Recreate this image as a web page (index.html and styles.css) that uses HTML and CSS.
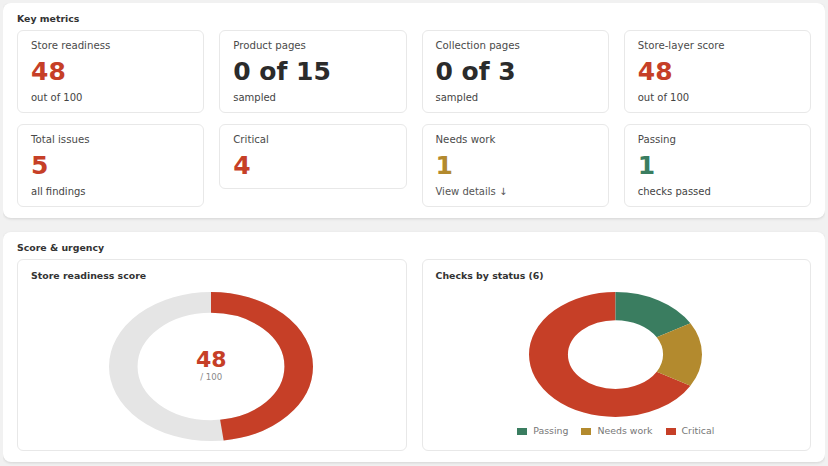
FILE: index.html
```html
<!doctype html>
<html lang="en">
<head>
  <meta charset="UTF-8">
  <meta name="viewport" content="width=device-width, initial-scale=1.0">
  <title>Store audit</title>
  <link rel="stylesheet" href="styles.css">
</head>
<body>
  <section class="panel">
    <h2 class="panel-title">Key metrics</h2>
    <div class="metric-grid">
      <div class="metric">
        <div class="metric-label">Store readiness</div>
        <div class="metric-value bad">48</div>
        <div class="metric-sub">out of 100</div>
      </div>
      <div class="metric">
        <div class="metric-label">Product pages</div>
        <div class="metric-value">0 of 15</div>
        <div class="metric-sub">sampled</div>
      </div>
      <div class="metric">
        <div class="metric-label">Collection pages</div>
        <div class="metric-value">0 of 3</div>
        <div class="metric-sub">sampled</div>
      </div>
      <div class="metric">
        <div class="metric-label">Store-layer score</div>
        <div class="metric-value bad">48</div>
        <div class="metric-sub">out of 100</div>
      </div>
      <div class="metric">
        <div class="metric-label">Total issues</div>
        <div class="metric-value bad">5</div>
        <div class="metric-sub">all findings</div>
      </div>
      <div class="metric">
        <div class="metric-label">Critical</div>
        <div class="metric-value bad">4</div>
      </div>
      <div class="metric">
        <div class="metric-label">Needs work</div>
        <div class="metric-value warn">1</div>
        <a class="metric-sub link" href="#details">View details ↓</a>
      </div>
      <div class="metric">
        <div class="metric-label">Passing</div>
        <div class="metric-value good">1</div>
        <div class="metric-sub">checks passed</div>
      </div>
    </div>
  </section>

  <section class="panel">
    <h2 class="panel-title">Score &amp; urgency</h2>
    <div class="chart-grid">
      <div class="chart-card">
        <h3 class="chart-title">Store readiness score</h3>
        <div class="gauge">
          <svg class="gauge-svg" viewBox="0 0 200 200" preserveAspectRatio="none">
            <circle cx="100" cy="100" r="86" fill="none" stroke="#e5e5e5" stroke-width="28"/>
            <circle cx="100" cy="100" r="86" fill="none" stroke="#c63f27" stroke-width="28"
                    pathLength="100" stroke-dasharray="48 100" transform="rotate(-90 100 100)"/>
          </svg>
          <div class="gauge-label">
            <span class="gauge-value">48</span>
            <span class="gauge-max">/ 100</span>
          </div>
        </div>
      </div>

      <div class="chart-card">
        <h3 class="chart-title">Checks by status (6)</h3>
        <svg class="status-svg" viewBox="0 0 200 200" preserveAspectRatio="none">
          <g transform="rotate(-90 100 100)" fill="none" stroke-width="45">
            <circle cx="100" cy="100" r="77.5" stroke="#c63f27" pathLength="100"
                    stroke-dasharray="66.67 100" stroke-dashoffset="-33.33"/>
            <circle cx="100" cy="100" r="77.5" stroke="#3a7d60" pathLength="100"
                    stroke-dasharray="16.67 100"/>
            <circle cx="100" cy="100" r="77.5" stroke="#b38a2e" pathLength="100"
                    stroke-dasharray="16.67 100" stroke-dashoffset="-16.67"/>
          </g>
        </svg>
        <ul class="legend">
          <li><span class="swatch good-bg"></span>Passing</li>
          <li><span class="swatch warn-bg"></span>Needs work</li>
          <li><span class="swatch bad-bg"></span>Critical</li>
        </ul>
      </div>
    </div>
  </section>
</body>
</html>
```

FILE: styles.css
```css
body {
  font-family: 'DejaVu Sans', 'Liberation Sans', sans-serif;
  background: #f1f1f1;
  margin: 3px;
  color: #333;
}
.panel {
  background: #fff;
  border-radius: 8px;
  box-shadow: 0 1px 3px rgba(0,0,0,0.12);
  padding: 10px 14px 11px;
  margin-bottom: 14px;
}
.panel-title {
  margin: 0 0 5px;
  font-size: 9.4px;
  line-height: 12px;
  font-weight: bold;
  color: #333;
}
.metric-grid {
  display: grid;
  grid-template-columns: repeat(4, 1fr);
  gap: 11px 15px;
  align-items: start;
}
.metric {
  border: 1px solid #e8e8e8;
  border-radius: 6px;
  padding: 9px 14px 8px 13px;
}
.metric-label {
  font-size: 10.2px;
  line-height: 12px;
  color: #4a4a4a;
}
.metric-value {
  margin-top: 6px;
  font-size: 25px;
  line-height: 28px;
  font-weight: bold;
  color: #2b2b2b;
}
.metric-sub {
  display: block;
  margin-top: 6px;
  font-size: 10px;
  line-height: 12px;
  color: #444;
}
.metric-sub.link {
  color: #555;
  text-decoration: none;
}
.bad { color: #c63f27; }
.warn { color: #b38a2e; }
.good { color: #3a7d60; }
.bad-bg { background: #c63f27; }
.warn-bg { background: #b38a2e; }
.good-bg { background: #3a7d60; }

.chart-grid {
  display: grid;
  grid-template-columns: 1fr 1fr;
  gap: 15px;
}
.chart-card {
  border: 1px solid #e8e8e8;
  border-radius: 6px;
  padding: 10px 14px 9px 13px;
  height: 192px;
  box-sizing: border-box;
  display: flex;
  flex-direction: column;
  align-items: center;
}
.chart-title {
  align-self: stretch;
  margin: 0;
  font-size: 9.4px;
  line-height: 12px;
  font-weight: bold;
  color: #333;
}
.gauge {
  position: relative;
  margin-top: 10px;
  width: 204px;
  height: 149px;
}
.gauge-svg {
  display: block;
  width: 100%;
  height: 100%;
}
.gauge-label {
  position: absolute;
  inset: 0;
  display: flex;
  flex-direction: column;
  align-items: center;
  justify-content: center;
  padding-bottom: 4px;
  box-sizing: border-box;
}
.gauge-value {
  font-size: 22px;
  line-height: 24px;
  font-weight: bold;
  color: #c63f27;
}
.gauge-max {
  font-size: 8.6px;
  line-height: 10px;
  color: #888;
}
.status-svg {
  display: block;
  margin-top: 10px;
  width: 173px;
  height: 125px;
}
.legend {
  list-style: none;
  margin: 8px 0 0;
  padding: 0;
  display: flex;
  gap: 13px;
  font-size: 9.4px;
  line-height: 12px;
  color: #777;
}
.legend li {
  display: flex;
  align-items: center;
}
.swatch {
  width: 10px;
  height: 7px;
  margin-right: 6px;
}
```
